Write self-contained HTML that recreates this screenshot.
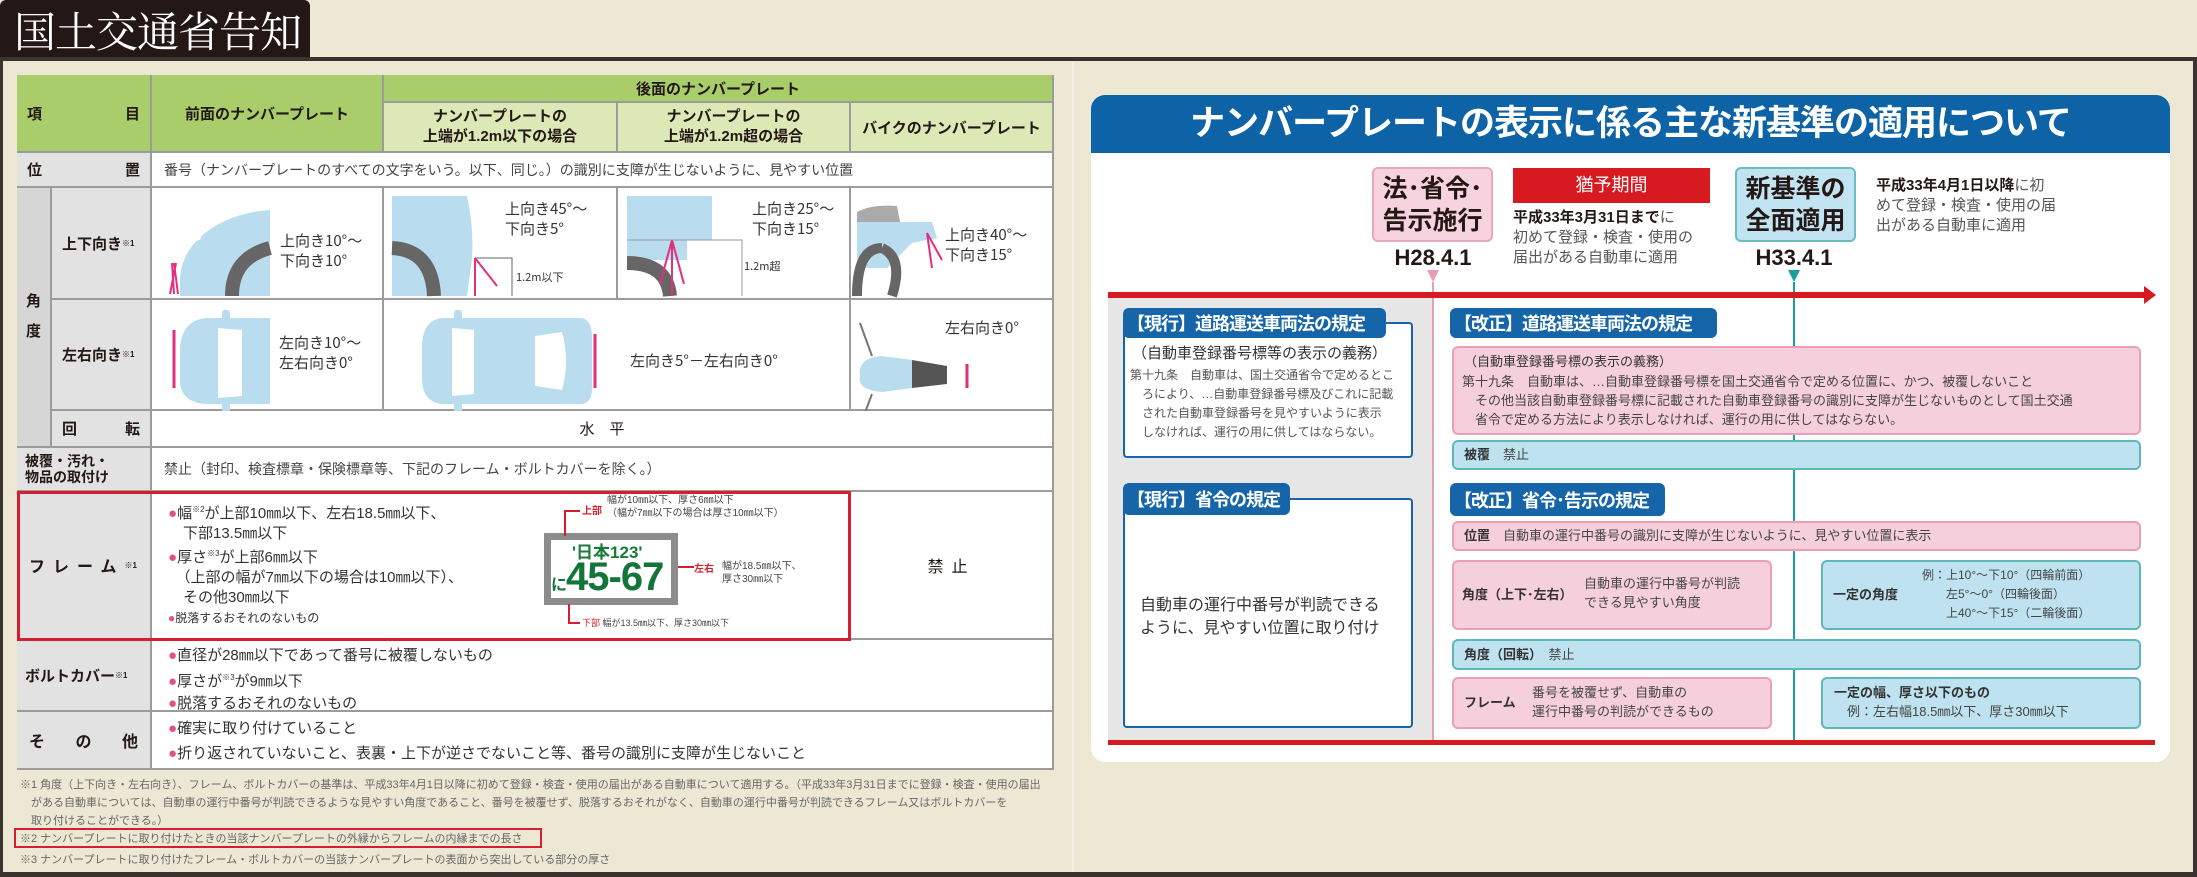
<!DOCTYPE html>
<html><head><meta charset="utf-8"><style>
*{margin:0;padding:0;box-sizing:border-box}
body{width:2197px;height:877px;background:#ede8d4;position:relative;overflow:hidden;font-family:"Liberation Sans","Noto Sans CJK JP",sans-serif;color:#231815}
.a{position:absolute}
.c{position:absolute;border-right:2px solid #9b9b9b;border-bottom:2px solid #9b9b9b;display:flex;align-items:center}
.g{background:#e2e2e2}
.b{font-weight:bold}
.ctr{justify-content:center;text-align:center}
.t{position:absolute;font-size:15px;line-height:19px;white-space:nowrap;color:#333}
.pk{color:#e0508a}
.lbl{position:absolute;background:#1565a8;color:#fff;font-weight:bold;font-size:18px;letter-spacing:-1px;border-radius:6px;display:flex;align-items:center;padding-left:4px;white-space:nowrap;overflow:hidden}
.pbox{position:absolute;background:#f5cfdc;border:2px solid #e9a0b8;border-radius:6px}
.bbox{position:absolute;background:#bfe2f1;border:2px solid #5fb8b8;border-radius:6px}
.s{font-size:14px;line-height:20px;color:#444;white-space:nowrap;position:absolute}
</style></head><body>
<!-- frame -->
<div class="a" style="left:0;top:0;width:310px;height:60px;background:#231815;border-radius:6px 6px 0 0"></div>
<div class="a" style="left:14px;top:4px;color:#fff;font-size:42px;line-height:52px;font-family:'Noto Serif CJK SC','Noto Sans CJK JP',serif;letter-spacing:-1px">国土交通省告知</div>
<div class="a" style="left:0;top:57px;width:2197px;height:4px;background:#3a3330"></div>
<div class="a" style="left:0;top:57px;width:3px;height:820px;background:#3a3330"></div>
<div class="a" style="left:2193px;top:57px;width:4px;height:820px;background:#3a3330"></div>
<div class="a" style="left:0;top:872px;width:2197px;height:5px;background:#3a3330"></div>
<div class="a" style="left:1072px;top:62px;width:2px;height:810px;background:#f4f0e2"></div>

<!-- table -->
<div class="a" style="left:17px;top:75px;width:1037px;height:695px;background:#fff;border:2px solid #8a8a8a"></div>
<div class="c g b" style="left:17px;top:75px;width:135px;height:78px;background:#a9cd6a;font-size:15px;padding:0 10px;justify-content:space-between"><span>項</span><span>目</span></div>
<div class="c ctr b" style="left:152px;top:75px;width:232px;height:78px;background:#a9cd6a;font-size:15px">前面のナンバープレート</div>
<div class="c ctr b" style="left:384px;top:75px;width:670px;height:28px;background:#a9cd6a;font-size:15px">後面のナンバープレート</div>
<div class="c ctr b" style="left:384px;top:103px;width:234px;height:50px;background:#dce9b6;font-size:15px;line-height:20px">ナンバープレートの<br>上端が1.2m以下の場合</div>
<div class="c ctr b" style="left:618px;top:103px;width:233px;height:50px;background:#dce9b6;font-size:15px;line-height:20px">ナンバープレートの<br>上端が1.2m超の場合</div>
<div class="c ctr b" style="left:851px;top:103px;width:203px;height:50px;background:#dce9b6;font-size:15px">バイクのナンバープレート</div>

<div class="c g b" style="left:17px;top:153px;width:135px;height:35px;font-size:15px;padding:0 10px;justify-content:space-between"><span>位</span><span>置</span></div>
<div class="c" style="left:152px;top:153px;width:902px;height:35px;font-size:14px;padding-left:12px;color:#444">番号（ナンバープレートのすべての文字をいう。以下、同じ。）の識別に支障が生じないように、見やすい位置</div>

<div class="c g b" style="left:17px;top:188px;width:35px;height:260px;font-size:15px;justify-content:center;background:#d6d6d6;line-height:30px;text-align:center">角<br>度</div>
<div class="c g b" style="left:52px;top:188px;width:100px;height:112px;font-size:15px;padding-left:10px">上下向き<sup style="font-size:8px">※1</sup></div>
<div class="c g b" style="left:52px;top:300px;width:100px;height:111px;font-size:15px;padding-left:10px">左右向き<sup style="font-size:8px">※1</sup></div>
<div class="c" style="left:152px;top:188px;width:232px;height:112px"></div>
<div class="c" style="left:384px;top:188px;width:234px;height:112px"></div>
<div class="c" style="left:618px;top:188px;width:233px;height:112px"></div>
<div class="c" style="left:851px;top:188px;width:203px;height:112px"></div>
<div class="c" style="left:152px;top:300px;width:232px;height:111px"></div>
<div class="c" style="left:384px;top:300px;width:467px;height:111px"></div>
<div class="c" style="left:851px;top:300px;width:203px;height:111px"></div>
<div class="c g b" style="left:52px;top:411px;width:100px;height:37px;font-size:15px;padding:0 10px;justify-content:space-between"><span>回</span><span>転</span></div>
<div class="c ctr" style="left:152px;top:411px;width:902px;height:37px;font-size:15px">水　平</div>
<div class="c g b" style="left:17px;top:448px;width:135px;height:44px;font-size:14px;line-height:16px;padding-left:8px">被覆・汚れ・<br>物品の取付け</div>
<div class="c" style="left:152px;top:448px;width:902px;height:44px;font-size:14px;padding-left:12px;color:#444">禁止（封印、検査標章・保険標章等、下記のフレーム・ボルトカバーを除く。）</div>
<div class="c g b" style="left:17px;top:492px;width:135px;height:148px;font-size:16px;padding-left:12px;letter-spacing:8px">フレーム<sup style="font-size:8px;letter-spacing:0">※1</sup></div>
<div class="c" style="left:152px;top:492px;width:699px;height:148px"></div>
<div class="c ctr" style="left:851px;top:492px;width:203px;height:148px;font-size:16px;letter-spacing:8px">禁止</div>
<div class="c g b" style="left:17px;top:640px;width:135px;height:72px;font-size:15px;padding-left:8px">ボルトカバー<sup style="font-size:8px">※1</sup></div>
<div class="c" style="left:152px;top:640px;width:902px;height:72px"></div>
<div class="c g b" style="left:17px;top:712px;width:135px;height:58px;font-size:16px;padding:0 12px;justify-content:space-between"><span>そ</span><span>の</span><span>他</span></div>
<div class="c" style="left:152px;top:712px;width:902px;height:58px"></div>

<!-- illustrations -->
<svg class="a" style="left:152px;top:188px" width="902" height="223" viewBox="0 0 902 223">
 <path d="M28 90 Q30 60 60 40 Q85 24 118 22 L118 108 L28 108 Z" fill="#b9dcef"/>
 <path d="M118 60 Q80 70 80 108" stroke="#666" stroke-width="14" fill="none"/>
 <path d="M36 48 L52 42 L48 52 L34 55 Z" fill="#fff"/>
 <path d="M20 75 L22 106 M24 75 L18 106 M22 75 L26 106" stroke="#e0307f" stroke-width="2"/>
 <text x="128" y="58" font-size="15" fill="#333" font-family="Noto Sans CJK JP">上向き10°～</text>
 <text x="128" y="78" font-size="15" fill="#333" font-family="Noto Sans CJK JP">下向き10°</text>
 <path d="M240 8 L315 8 Q322 40 320 70 L315 108 L240 108 Z" fill="#b9dcef"/>
 <path d="M240 60 Q280 62 282 108" stroke="#666" stroke-width="14" fill="none"/>
 <path d="M323 70 L323 108 M323 70 L345 98" stroke="#e0307f" stroke-width="2"/>
 <path d="M323 70 L360 70 L360 108" stroke="#666" stroke-width="1" fill="none"/>
 <text x="353" y="26" font-size="15" fill="#333" font-family="Noto Sans CJK JP">上向き45°～</text>
 <text x="353" y="46" font-size="15" fill="#333" font-family="Noto Sans CJK JP">下向き5°</text>
 <text x="364" y="93" font-size="11" fill="#333" font-family="Noto Sans CJK JP">1.2m以下</text>
 <path d="M475 8 L560 8 L560 52 L535 52 L535 72 L475 72 Z" fill="#b9dcef"/>
 <path d="M475 75 Q515 75 518 108" stroke="#666" stroke-width="14" fill="none"/>
 <path d="M520 52 L520 108 M520 52 L508 96 M520 52 L532 96" stroke="#e0307f" stroke-width="2"/>
 <path d="M475 52 L590 52 L590 108" stroke="#999" stroke-width="1" fill="none"/>
 <text x="600" y="26" font-size="15" fill="#333" font-family="Noto Sans CJK JP">上向き25°～</text>
 <text x="600" y="46" font-size="15" fill="#333" font-family="Noto Sans CJK JP">下向き15°</text>
 <text x="592" y="82" font-size="11" fill="#333" font-family="Noto Sans CJK JP">1.2m超</text>
 <path d="M705 24 Q720 16 745 18 L748 34 L705 34 Z" fill="#aaa"/>
 <path d="M705 34 L780 34 L785 50 L760 55 L735 80 L705 80 Z" fill="#b9dcef"/>
 <path d="M730 60 Q705 60 705 108 M730 60 Q752 70 740 108" stroke="#666" stroke-width="10" fill="none"/>
 <path d="M775 45 L780 80 M775 45 L790 72" stroke="#e0307f" stroke-width="2"/>
 <text x="793" y="52" font-size="15" fill="#333" font-family="Noto Sans CJK JP">上向き40°～</text>
 <text x="793" y="72" font-size="15" fill="#333" font-family="Noto Sans CJK JP">下向き15°</text>
 <path d="M118 130 L55 130 Q30 132 28 160 L28 195 Q30 215 55 216 L118 216 Z" fill="#b9dcef"/>
 <rect x="70" y="122" width="8" height="104" rx="3" fill="#b9dcef"/>
 <path d="M66 140 L90 142 L90 208 L66 210 Z" fill="#fff"/>
 <path d="M22 142 L22 200" stroke="#e0307f" stroke-width="3"/>
 <text x="127" y="160" font-size="15" fill="#333" font-family="Noto Sans CJK JP">左向き10°～</text>
 <text x="127" y="180" font-size="15" fill="#333" font-family="Noto Sans CJK JP">左右向き0°</text>
 <path d="M290 130 L430 130 Q440 132 440 150 L440 200 Q440 215 430 216 L290 216 Q270 214 270 190 L270 155 Q272 132 290 130 Z" fill="#b9dcef"/>
 <rect x="302" y="122" width="8" height="104" rx="3" fill="#b9dcef"/>
 <path d="M300 140 L322 142 L322 206 L300 208 Z" fill="#fff"/>
 <path d="M383 148 L410 144 Q418 173 410 202 L383 198 Z" fill="#fff"/>
 <path d="M443 146 L443 200" stroke="#e0307f" stroke-width="3"/>
 <text x="478" y="178" font-size="15" fill="#333" font-family="Noto Sans CJK JP">左向き5°－左右向き0°</text>
 <path d="M708 188 Q705 170 730 168 L760 172 L760 200 L730 204 Q705 202 708 188 Z" fill="#b9dcef"/>
 <path d="M760 172 L795 178 L795 196 L760 200 Z" fill="#555"/>
 <path d="M708 135 L720 168 M708 238 L720 206" stroke="#777" stroke-width="2"/>
 <path d="M815 176 L815 200" stroke="#e0307f" stroke-width="3"/>
 <text x="793" y="145" font-size="15" fill="#333" font-family="Noto Sans CJK JP">左右向き0°</text>
</svg>

<!-- frame row content -->
<div class="t" style="left:168px;top:500px;line-height:20px"><span class="pk">●</span>幅<sup style="font-size:8px">※2</sup>が上部10㎜以下、左右18.5㎜以下、<br>　下部13.5㎜以下<br><span class="pk">●</span>厚さ<sup style="font-size:8px">※3</sup>が上部6㎜以下<br>　（上部の幅が7㎜以下の場合は10㎜以下）、<br>　その他30㎜以下<br><span class="pk" style="font-size:12px">●</span><span style="font-size:12px">脱落するおそれのないもの</span></div>
<div class="a" style="left:544px;top:533px;width:134px;height:72px;border:7px solid #8c8c8c;background:#fff"></div>
<div class="a" style="left:572px;top:538px;font-size:17px;color:#1a7a3a;font-weight:bold">'日本123'</div>
<div class="a" style="left:551px;top:554px;font-size:40px;line-height:46px;color:#13753a;font-weight:bold;letter-spacing:-1px"><span style="font-size:16px">に</span>45-67</div>
<div class="a" style="left:564px;top:510px;width:2px;height:26px;background:#d51e2f"></div>
<div class="a" style="left:564px;top:510px;width:16px;height:2px;background:#d51e2f"></div>
<div class="a" style="left:582px;top:502px;font-size:10px;color:#d51e2f;font-weight:bold">上部</div>
<div class="a" style="left:607px;top:494px;font-size:10px;line-height:13px;color:#444">幅が10㎜以下、厚さ6㎜以下<br>（幅が7㎜以下の場合は厚さ10㎜以下）</div>
<div class="a" style="left:678px;top:566px;width:16px;height:2px;background:#d51e2f"></div>
<div class="a" style="left:694px;top:560px;font-size:10px;color:#d51e2f;font-weight:bold">左右</div>
<div class="a" style="left:722px;top:560px;font-size:10px;line-height:13px;color:#444">幅が18.5㎜以下、<br>厚さ30㎜以下</div>
<div class="a" style="left:568px;top:604px;width:2px;height:20px;background:#d51e2f"></div>
<div class="a" style="left:568px;top:622px;width:12px;height:2px;background:#d51e2f"></div>
<div class="a" style="left:582px;top:616px;font-size:9px;color:#444"><span style="color:#d51e2f">下部</span> 幅が13.5㎜以下、厚さ30㎜以下</div>
<div class="a" style="left:17px;top:491px;width:834px;height:150px;border:3px solid #d51e2f"></div>

<div class="t" style="left:168px;top:645px;line-height:22px"><span class="pk">●</span>直径が28㎜以下であって番号に被覆しないもの<br><span class="pk">●</span>厚さが<sup style="font-size:8px">※3</sup>が9㎜以下<br><span class="pk">●</span>脱落するおそれのないもの</div>
<div class="t" style="left:168px;top:716px;line-height:25px"><span class="pk">●</span>確実に取り付けていること<br><span class="pk">●</span>折り返されていないこと、表裏・上下が逆さでないこと等、番号の識別に支障が生じないこと</div>

<div class="a" style="left:20px;top:776px;font-size:11px;line-height:18px;color:#666;width:1040px">※1 角度（上下向き・左右向き）、フレーム、ボルトカバーの基準は、平成33年4月1日以降に初めて登録・検査・使用の届出がある自動車について適用する。（平成33年3月31日までに登録・検査・使用の届出<br>　がある自動車については、自動車の運行中番号が判読できるような見やすい角度であること、番号を被覆せず、脱落するおそれがなく、自動車の運行中番号が判読できるフレーム又はボルトカバーを<br>　取り付けることができる。）</div>
<div class="a" style="left:14px;top:828px;width:528px;height:20px;border:2px solid #d51e2f"></div>
<div class="a" style="left:20px;top:830px;font-size:11px;color:#666">※2 ナンバープレートに取り付けたときの当該ナンバープレートの外縁からフレームの内縁までの長さ</div>
<div class="a" style="left:20px;top:851px;font-size:11px;color:#666">※3 ナンバープレートに取り付けたフレーム・ボルトカバーの当該ナンバープレートの表面から突出している部分の厚さ</div>

<!-- right panel -->
<div class="a" style="left:1091px;top:95px;width:1079px;height:667px;background:#fff;border-radius:14px"></div>
<div class="a" style="left:1091px;top:95px;width:1079px;height:58px;background:#0e62a6;border-radius:14px 14px 0 0;color:#fff;font-size:35px;font-weight:bold;line-height:58px;text-align:center;letter-spacing:-1px">ナンバープレートの表示に係る主な新基準の適用について</div>
<div class="a" style="left:1108px;top:298px;width:325px;height:442px;background:#e6e6e6"></div>
<div class="a" style="left:1372px;top:167px;width:121px;height:75px;background:#f7d3df;border:2px solid #eaa8bf;border-radius:6px;font-size:25px;font-weight:bold;line-height:32px;text-align:center;padding-top:4px">法･省令･<br>告示施行</div>
<div class="a" style="left:1513px;top:168px;width:197px;height:35px;background:#d71920;color:#fff;font-size:18px;line-height:35px;text-align:center">猶予期間</div>
<div class="a" style="left:1513px;top:208px;font-size:15px;line-height:20px;color:#555;white-space:nowrap"><b style="color:#231815">平成33年3月31日まで</b>に<br>初めて登録・検査・使用の<br>届出がある自動車に適用</div>
<div class="a" style="left:1735px;top:167px;width:121px;height:75px;background:#c2e4f2;border:2px solid #6cbcc4;border-radius:6px;font-size:25px;font-weight:bold;line-height:32px;text-align:center;padding-top:4px">新基準の<br>全面適用</div>
<div class="a" style="left:1876px;top:176px;font-size:15px;line-height:20px;color:#555;white-space:nowrap"><b style="color:#231815">平成33年4月1日以降</b>に初<br>めて登録・検査・使用の届<br>出がある自動車に適用</div>
<div class="a" style="left:1383px;top:245px;width:100px;text-align:center;font-size:22px;font-weight:bold">H28.4.1</div>
<div class="a" style="left:1744px;top:245px;width:100px;text-align:center;font-size:22px;font-weight:bold">H33.4.1</div>
<div class="a" style="left:1427px;top:270px;width:0;height:0;border-left:6px solid transparent;border-right:6px solid transparent;border-top:12px solid #e99bb8"></div>
<div class="a" style="left:1788px;top:270px;width:0;height:0;border-left:6px solid transparent;border-right:6px solid transparent;border-top:12px solid #1aa09a"></div>
<div class="a" style="left:1432px;top:282px;width:2px;height:460px;background:#e99bb8"></div>
<div class="a" style="left:1793px;top:282px;width:2px;height:460px;background:#1aa09a"></div>
<div class="a" style="left:1108px;top:292px;width:1040px;height:6px;background:#d71920"></div>
<div class="a" style="left:2144px;top:286px;width:0;height:0;border-top:9px solid transparent;border-bottom:9px solid transparent;border-left:12px solid #d71920"></div>
<div class="a" style="left:1108px;top:740px;width:1047px;height:5px;background:#d71920"></div>

<div class="a" style="left:1123px;top:322px;width:290px;height:136px;background:#fff;border:2px solid #1565a8;border-radius:4px"></div>
<div class="lbl" style="left:1123px;top:308px;width:263px;height:30px">【現行】道路運送車両法の規定</div>
<div class="s" style="left:1132px;top:344px;font-size:15px;color:#333">（自動車登録番号標等の表示の義務）</div>
<div class="s" style="left:1130px;top:366px;font-size:12px;line-height:19px;color:#555">第十九条　自動車は、国土交通省令で定めるとこ<br>　ろにより、…自動車登録番号標及びこれに記載<br>　された自動車登録番号を見やすいように表示<br>　しなければ、運行の用に供してはならない。</div>
<div class="a" style="left:1123px;top:498px;width:290px;height:230px;background:#fff;border:2px solid #1565a8;border-radius:4px"></div>
<div class="lbl" style="left:1123px;top:483px;width:167px;height:32px">【現行】省令の規定</div>
<div class="s" style="left:1140px;top:594px;font-size:16px;line-height:23px;color:#333">自動車の運行中番号が判読できる<br>ように、見やすい位置に取り付け</div>

<div class="lbl" style="left:1450px;top:308px;width:267px;height:30px">【改正】道路運送車両法の規定</div>
<div class="pbox" style="left:1452px;top:346px;width:689px;height:89px"></div>
<div class="s" style="left:1464px;top:352px;font-size:13px;color:#333">（自動車登録番号標の表示の義務）</div>
<div class="s" style="left:1462px;top:372px;font-size:13px;line-height:19px">第十九条　自動車は、…自動車登録番号標を国土交通省令で定める位置に、かつ、被覆しないこと<br>　その他当該自動車登録番号標に記載された自動車登録番号の識別に支障が生じないものとして国土交通<br>　省令で定める方法により表示しなければ、運行の用に供してはならない。</div>
<div class="bbox" style="left:1452px;top:440px;width:689px;height:30px"></div>
<div class="s" style="left:1464px;top:445px;font-size:13px"><b style="color:#333">被覆</b>　禁止</div>
<div class="lbl" style="left:1450px;top:483px;width:215px;height:33px">【改正】省令･告示の規定</div>
<div class="pbox" style="left:1452px;top:521px;width:689px;height:30px"></div>
<div class="s" style="left:1464px;top:526px;font-size:13px"><b style="color:#333">位置</b>　自動車の運行中番号の識別に支障が生じないように、見やすい位置に表示</div>
<div class="pbox" style="left:1452px;top:560px;width:320px;height:70px"></div>
<div class="s" style="left:1462px;top:585px;font-size:13px;font-weight:bold;color:#333">角度（上下･左右）</div>
<div class="s" style="left:1584px;top:574px;font-size:13px;line-height:19px">自動車の運行中番号が判読<br>できる見やすい角度</div>
<div class="bbox" style="left:1821px;top:560px;width:320px;height:70px"></div>
<div class="s" style="left:1833px;top:585px;font-size:13px;font-weight:bold;color:#333">一定の角度</div>
<div class="s" style="left:1922px;top:566px;font-size:12px;line-height:19px">例：上10°～下10°（四輪前面）<br>　　左5°～0°（四輪後面）<br>　　上40°～下15°（二輪後面）</div>
<div class="bbox" style="left:1452px;top:639px;width:689px;height:31px"></div>
<div class="s" style="left:1464px;top:645px;font-size:13px"><b style="color:#333">角度（回転）</b>　禁止</div>
<div class="pbox" style="left:1452px;top:677px;width:320px;height:52px"></div>
<div class="s" style="left:1464px;top:693px;font-size:13px;font-weight:bold;color:#333">フレーム</div>
<div class="s" style="left:1532px;top:683px;font-size:13px;line-height:19px">番号を被覆せず、自動車の<br>運行中番号の判読ができるもの</div>
<div class="bbox" style="left:1821px;top:677px;width:320px;height:52px"></div>
<div class="s" style="left:1834px;top:683px;font-size:13px;line-height:19px"><b style="color:#333">一定の幅、厚さ以下のもの</b><br>　例：左右幅18.5㎜以下、厚さ30㎜以下</div>
</body></html>
